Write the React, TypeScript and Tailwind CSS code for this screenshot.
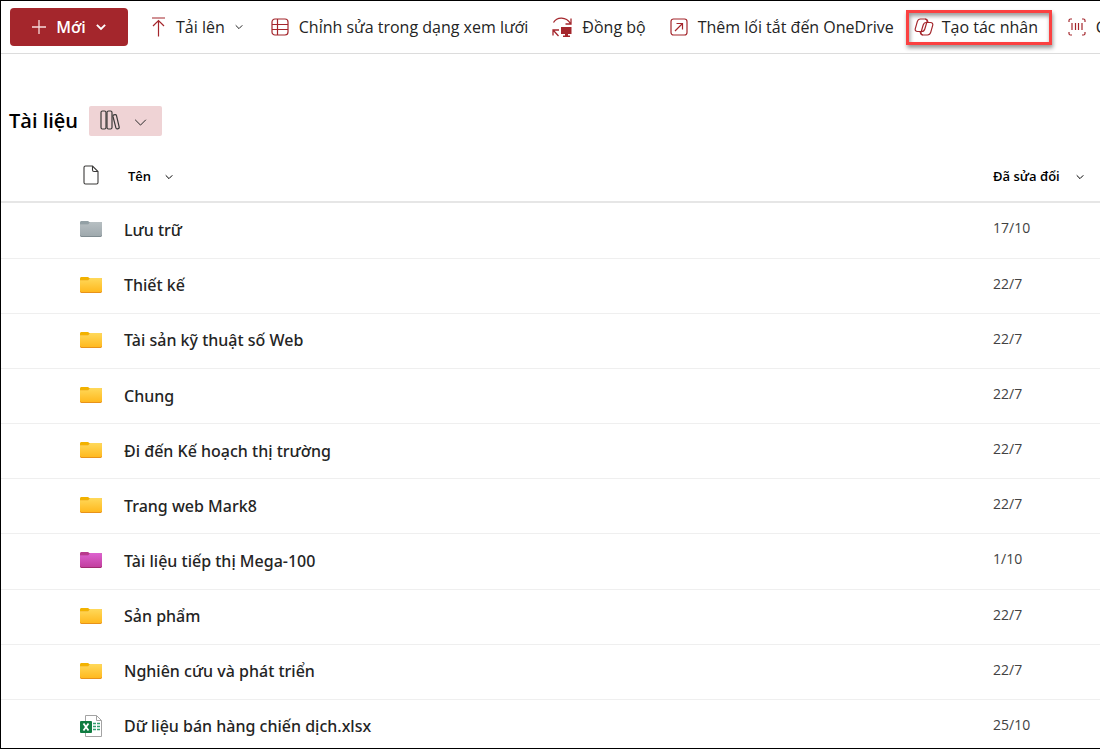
import React from 'react'
import clsx from 'clsx'

type FolderTone = 'yellow' | 'gray' | 'pink'

type Item = {
    name: string
    modified: string
    type: FolderTone | 'excel'
}

const items: Item[] = [
    { name: 'Lưu trữ', modified: '17/10', type: 'gray' },
    { name: 'Thiết kế', modified: '22/7', type: 'yellow' },
    { name: 'Tài sản kỹ thuật số Web', modified: '22/7', type: 'yellow' },
    { name: 'Chung', modified: '22/7', type: 'yellow' },
    { name: 'Đi đến Kế hoạch thị trường', modified: '22/7', type: 'yellow' },
    { name: 'Trang web Mark8', modified: '22/7', type: 'yellow' },
    { name: 'Tài liệu tiếp thị Mega-100', modified: '1/10', type: 'pink' },
    { name: 'Sản phẩm', modified: '22/7', type: 'yellow' },
    { name: 'Nghiên cứu và phát triển', modified: '22/7', type: 'yellow' },
    { name: 'Dữ liệu bán hàng chiến dịch.xlsx', modified: '25/10', type: 'excel' },
]

const tones = {
    yellow: { top: '#ffd95a', bottom: '#ffb91f', tab: '#f2b200', edge: '#e8921a' },
    gray: { top: '#b7bfc2', bottom: '#9fa9ad', tab: '#93a0a5', edge: '#7f8b90' },
    pink: { top: '#dd62d0', bottom: '#c23f9f', tab: '#b83a8c', edge: '#a12a70' },
}

const FolderIcon = ({ tone }: { tone: FolderTone }) => {
    const c = tones[tone]
    return (
        <svg width="22" height="16" viewBox="0 0 22 16" aria-hidden="true">
            <defs>
                <linearGradient id={`folder-${tone}`} x1="0" y1="0" x2="0" y2="1">
                    <stop offset="0" stopColor={c.top} />
                    <stop offset="1" stopColor={c.bottom} />
                </linearGradient>
            </defs>
            <path d="M0 1.5C0 .6.6 0 1.5 0H8l2 1.5V5H0z" fill={c.tab} />
            <path d="M0 3.2h8.2L10 1h10.6c.8 0 1.4.6 1.4 1.4v12.2c0 .8-.6 1.4-1.4 1.4H1.4C.6 16 0 15.4 0 14.6z" fill={c.edge} />
            <path d="M0 3.2h8.2L10 1h10.6c.8 0 1.4.6 1.4 1.4v11.2c0 .8-.6 1.4-1.4 1.4H1.4C.6 15 0 14.4 0 13.6z" fill={`url(#folder-${tone})`} />
        </svg>
    )
}

const ExcelIcon = () => (
    <svg width="22" height="22" viewBox="0 0 22 22" fill="none" aria-hidden="true">
        <path d="M5.5.5h11l5 5v16h-16z" fill="#fff" stroke="#a3a3a3" />
        <path d="M16.5.5v5h5" stroke="#a3a3a3" />
        <path d="M13 8.5h3M17 8.5h3M13 11.5h3M17 11.5h3M13 14.5h3M17 14.5h3" stroke="#33a06f" strokeWidth="1.5" />
        <rect y="6" width="12" height="12" rx="1" fill="#107c41" />
        <path d="M3.5 8.5l5 7M8.5 8.5l-5 7" stroke="#fff" strokeWidth="1.8" />
    </svg>
)

const ChevronIcon = ({ className, size = 8 }: { className?: string; size?: number }) => (
    <svg width={size} height={size} viewBox="0 0 8 8" fill="none" stroke="currentColor" className={clsx('shrink-0', className)} aria-hidden="true">
        <path d="M.7 2.3 4 5.6l3.3-3.3" />
    </svg>
)

const PlusIcon = () => (
    <svg width="14" height="14" viewBox="0 0 14 14" fill="none" stroke="#f6dada" strokeWidth="1.3" aria-hidden="true">
        <path d="M7 0v14M0 7h14" />
    </svg>
)

const UploadIcon = () => (
    <svg width="15" height="20" viewBox="0 0 15 20" fill="none" stroke="#a4262c" strokeWidth="1.2" aria-hidden="true">
        <path d="M1 1h13M7.5 19.5v-16M2 9l5.5-5.5L13 9" />
    </svg>
)

const GridIcon = () => (
    <svg width="18" height="18" viewBox="0 0 18 18" fill="none" stroke="#a4262c" strokeWidth="1.2" aria-hidden="true">
        <rect x="1" y="1" width="16" height="16" rx="3" />
        <path d="M6.5 1v16M1 6.5h16M1 11.5h16" />
    </svg>
)

const SyncIcon = () => (
    <svg width="20" height="20" viewBox="0 0 20 20" fill="none" stroke="#a4262c" strokeWidth="1.3" aria-hidden="true">
        <path d="M1.5 5.5C5-.5 14-.5 18.5 6.5M19 1.5V7h-5.5" />
        <path d="M1 18.5V13h6M1.5 13.5l5 5.5" />
        <path d="M9 10h10.5v7H16v1.5h2V20h-7v-1.5h2V17H9z" fill="#a4262c" stroke="none" />
    </svg>
)

const ShortcutIcon = () => (
    <svg width="18" height="18" viewBox="0 0 18 18" fill="none" stroke="#a4262c" strokeWidth="1.2" aria-hidden="true">
        <rect x="1" y="1" width="16" height="16" rx="2.5" />
        <path d="M5 13l7.5-7.5M6.5 5.5h6v6" />
    </svg>
)

const CopilotIcon = () => (
    <svg width="20" height="18" viewBox="0 0 20 18" fill="none" stroke="#a4262c" strokeWidth="1.2" strokeLinejoin="round" aria-hidden="true">
        <path d="M6.5 1H11c1.600 0 2.400 1.200 2 2.700l-2.200 7.300c-.5 1.600-1.500 2.500-3 2.500H3.500c-1.800 0-2.700-1.200-2.200-2.900l2-7C3.800 2 4.900 1 6.500 1z" />
        <path d="M12.200 4.500h4.300c1.800 0 2.700 1.200 2.200 2.900l-2 7c-.5 1.700-1.600 2.600-3.200 2.600H9c-1.600 0-2.400-1.200-2-2.700L9.200 7c.5-1.600 1.500-2.500 3-2.500z" />
        <path d="M11 1c1.600 0 2.300.8 2.600 2l.4 1.500M9 17c-1.500 0-2.200-.8-2.500-2L6 13.500" />
    </svg>
)

const BarcodeIcon = () => (
    <svg width="18" height="18" viewBox="0 0 18 18" fill="none" stroke="#a4262c" strokeWidth="1.2" aria-hidden="true">
        <path d="M4 1H2.5Q1 1 1 2.5V4M14 1h1.5Q17 1 17 2.5V4M4 17H2.5Q1 17 1 15.5V14M14 17h1.5q1.5 0 1.5-1.5V14" />
        <path d="M4 5v7M7.5 5v7M10.5 5v7M14 5v7" />
    </svg>
)

const LibraryIcon = () => (
    <svg width="20" height="20" viewBox="0 0 20 20" fill="none" stroke="#3b3a39" strokeWidth="1.2" aria-hidden="true">
        <rect x="1" y="1" width="5" height="18" rx="1.5" />
        <rect x="7" y="1" width="5" height="18" rx="1.5" />
        <path d="M13 6.5q-.3-1.300 1-1.600l1-.2q1.200-.2 1.500 1L19.200 17q.2 1.400-1 1.700l-.8.2q-1.200.2-1.500-1z" />
    </svg>
)

const FileIcon = () => (
    <svg width="16" height="20" viewBox="0 0 16 20" fill="none" stroke="#3b3a39" strokeWidth="1.1" aria-hidden="true">
        <path d="M2.5 1h7L15 6.500v11q0 1.500-1.500 1.500h-11Q1 19 1 17.500v-15Q1 1 2.500 1z" />
        <path d="M9.5 1v4q0 1.500 1.500 1.500h4" />
    </svg>
)

const commandClass = 'flex shrink-0 items-center gap-2.5'

const App = () => {
    return (
        <div className="h-screen overflow-hidden border-y border-l border-black bg-white font-['Open_Sans','Noto_Sans',sans-serif] text-[#242424]">
            <div role="toolbar" className="flex h-[53px] items-center overflow-hidden border-b border-[#dcdcdc] pl-[9px] text-base whitespace-nowrap">
                <button className="flex h-[38px] w-[118px] shrink-0 items-center justify-center gap-2.5 rounded bg-[#a4262c] font-semibold text-white">
                    <PlusIcon />
                    Mới
                    <ChevronIcon size={10} className="stroke-[1.5]" />
                </button>
                <button className={clsx(commandClass, 'ml-[23px]')}>
                    <UploadIcon />
                    Tải lên
                    <ChevronIcon />
                </button>
                <button className={clsx(commandClass, 'ml-7')}>
                    <GridIcon />
                    Chỉnh sửa trong dạng xem lưới
                </button>
                <button className={clsx(commandClass, 'ml-6')}>
                    <SyncIcon />
                    Đồng bộ
                </button>
                <button className={clsx(commandClass, 'ml-6')}>
                    <ShortcutIcon />
                    Thêm lối tắt đến OneDrive
                </button>
                <button className="ml-3 flex h-[35px] w-[146px] shrink-0 items-center gap-2 border-3 border-[#fb4141] pl-[5px] shadow-[1px_3px_4px_#999,inset_1px_3px_4px_#999]">
                    <CopilotIcon />
                    Tạo tác nhân
                </button>
                <button className={clsx(commandClass, 'ml-4')}>
                    <BarcodeIcon />
                    C
                </button>
            </div>

            <main>
                <div className="flex items-center gap-[11px] pt-[52px] pl-2">
                    <h1 className="text-xl font-semibold text-black">Tài liệu</h1>
                    <button aria-label="Thư viện" className="flex h-[30px] w-[73px] items-center justify-between rounded-xs bg-[#efd3d5] pr-[15px] pb-0.5 pl-[11px]">
                        <LibraryIcon />
                        <ChevronIcon size={13} className="mt-1 stroke-[0.6]" />
                    </button>
                </div>

                <table className="mt-[13px] h-[606px] w-full table-fixed border-collapse text-left">
                    <thead>
                        <tr className="h-[53px] border-b-2 border-[#e6e6e6] text-[13px] text-black">
                            <th className="w-[123px] pl-[82px]" aria-label="Loại tệp">
                                <FileIcon />
                            </th>
                            <th className="pt-1 font-semibold">
                                <button className="flex items-center gap-3.5 pl-1">
                                    Tên
                                    <ChevronIcon />
                                </button>
                            </th>
                            <th className="w-[107px] pt-1 font-semibold">
                                <button className="flex items-center gap-4">
                                    Đã sửa đổi
                                    <ChevronIcon />
                                </button>
                            </th>
                        </tr>
                    </thead>
                    <tbody>
                        {items.map((item) => (
                            <tr key={item.name} className="border-b border-[#efefef]">
                                <td className="pb-0.5 pl-[79px]">
                                    {item.type === 'excel' ? <ExcelIcon /> : <FolderIcon tone={item.type} />}
                                </td>
                                <td className="pb-px">
                                    <a href="#" className="font-['Noto_Sans',sans-serif] text-base font-medium">{item.name}</a>
                                </td>
                                <td className="pb-1 text-sm text-[#424242]">{item.modified}</td>
                            </tr>
                        ))}
                    </tbody>
                </table>
            </main>
        </div>
    )
}

export default App
